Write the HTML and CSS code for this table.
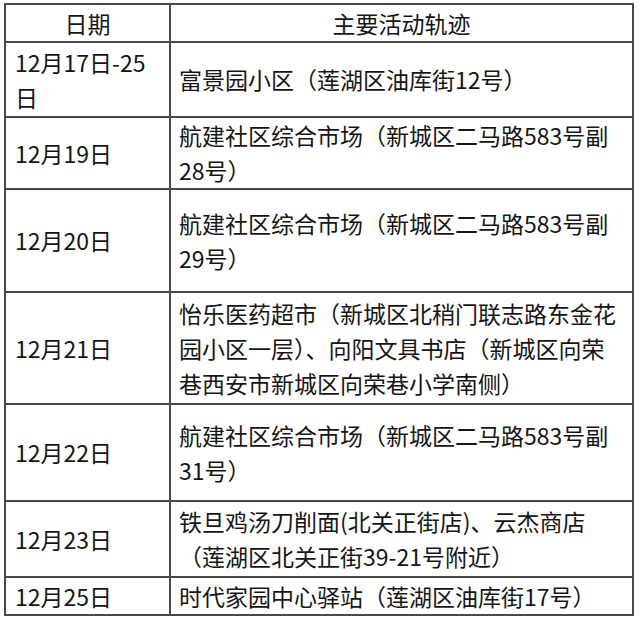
FILE: index.html
```html
<!DOCTYPE html>
<html lang="zh-CN">
<head>
<meta charset="utf-8">
<link rel="stylesheet" href="styles.css">
</head>
<body>
<table class="trace">
  <colgroup><col class="c-date"><col class="c-place"></colgroup>
  <tr class="head"><th>日期</th><th>主要活动轨迹</th></tr>
  <tr class="r1"><td>12月17日-25日</td><td>富景园小区（莲湖区油库街12号）</td></tr>
  <tr class="r2"><td>12月19日</td><td>航建社区综合市场（新城区二马路583号副28号）</td></tr>
  <tr class="r3"><td>12月20日</td><td>航建社区综合市场（新城区二马路583号副29号）</td></tr>
  <tr class="r4"><td>12月21日</td><td>怡乐医药超市（新城区北稍门联志路东金花园小区一层）、向阳文具书店（新城区向荣巷西安市新城区向荣巷小学南侧）</td></tr>
  <tr class="r5"><td>12月22日</td><td>航建社区综合市场（新城区二马路583号副31号）</td></tr>
  <tr class="r6"><td>12月23日</td><td>铁旦鸡汤刀削面(北关正街店)、云杰商店（莲湖区北关正街39-21号附近）</td></tr>
  <tr class="r7"><td>12月25日</td><td>时代家园中心驿站（莲湖区油库街17号）</td></tr>
</table>
</body>
</html>
```
FILE: styles.css
```css
html, body {
  margin: 0;
  background: #ffffff;
}
body {
  padding: 3px 0 0 4px;
  font-family: "Noto Sans CJK SC", "Noto Sans", sans-serif;
  color: #151515;
}
.trace {
  border-collapse: collapse;
  width: 630px;
  table-layout: fixed;
  font-size: 23px;
  line-height: 35px;
}
.c-date { width: 165px; }
.trace th, .trace td {
  border: 2px solid #4a4a4a;
  vertical-align: middle;
  padding: 0;
  font-weight: normal;
}
.trace th { text-align: center; }
.trace td:first-child { text-align: left; padding: 0 10px 0 9px; }
.trace td:last-child { text-align: left; padding: 0 10px 0 8px; }
.head { height: 38px; }
.r1 { height: 75px; }
.r2 { height: 72px; }
.r3 { height: 103px; }
.r4 { height: 112px; }
.r5 { height: 97px; }
.r6 { height: 76px; }
.r7 { height: 38px; }
```
